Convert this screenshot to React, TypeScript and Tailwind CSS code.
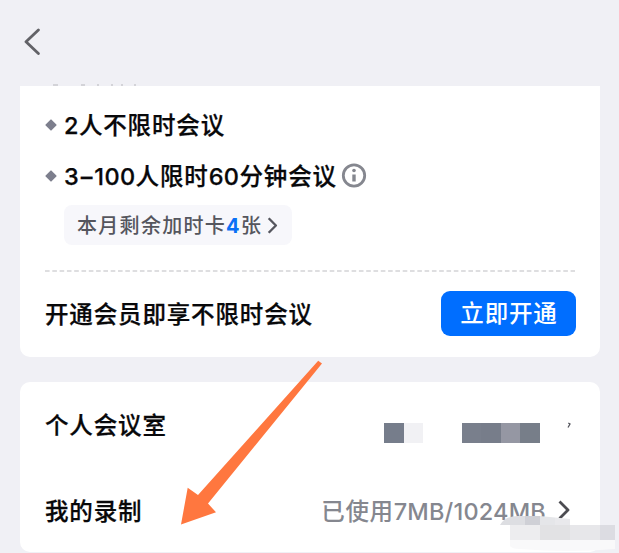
import type { ReactNode } from "react";

const mosaic = [
  "bg-[#797f8c]",
  "bg-[#777d8a]",
  "bg-[#9597a3]",
  "bg-[#777e89]",
];

function Num({ children }: { children: ReactNode }) {
  return <span className="font-['Inter',sans-serif] font-medium tracking-[0.4px]">{children}</span>;
}

function Chevron({ className }: { className: string }) {
  return (
    <svg className={className} viewBox="0 0 12 20" fill="none" stroke="currentColor" strokeLinejoin="round">
      <path d="M1.5 1.5 10 10l-8.5 8.5" />
    </svg>
  );
}

function Feature({ children }: { children: ReactNode }) {
  return (
    <div className="flex h-8 items-center text-[23.5px] tracking-[0.85px] whitespace-nowrap text-[#08080a] [-webkit-text-stroke:0.25px]">
      <svg className="mr-[7px] h-3 w-3 shrink-0" viewBox="0 0 12 12">
        <path d="M6 1.2 10.8 6 6 10.8 1.2 6Z" fill="#7d7f8d" stroke="#7d7f8d" strokeWidth="1.6" strokeLinejoin="round" />
      </svg>
      {children}
    </div>
  );
}

export default function App() {
  return (
    <div className="relative flex h-[553px] w-[619px] flex-col overflow-hidden bg-[#f0f0f5] font-['Noto_Sans_CJK_SC',sans-serif] font-medium">
      <header className="flex h-[86px] shrink-0 flex-col justify-between pt-7 pl-6">
        <svg className="h-7 w-4" viewBox="0 0 16 28" fill="none" stroke="#626267" strokeWidth="2.8" strokeLinecap="round" strokeLinejoin="round">
          <path d="M14.4 2 2 13.8 14.4 25.6" />
        </svg>
        {/* tops of the line scrolled under the header */}
        <svg className="ml-[26px] h-[2px] w-[90px]" viewBox="0 0 90 2" stroke="#c9c9ce" strokeWidth="1.4">
          <path d="M3 1h5M31 1h4M47 1h2M61 1h2M71 1h2M84 1h2" />
        </svg>
      </header>

      <section className="mx-5 h-[271px] w-[580px] shrink-0 rounded-b-[10px] bg-white px-[25px] pt-[23px]">
        <Feature>
          <span>
            <Num>2</Num>人不限时会议
          </span>
        </Feature>
        <div className="mt-[19px]">
          <Feature>
            <span>
              <Num>
                3<span className="mx-[1.5px]">–</span>100
              </Num>
              人限时<Num>60</Num>分钟会议
            </span>
            <svg className="ml-1 h-[26px] w-[26px]" viewBox="0 0 26 26" fill="none" stroke="#85878f">
              <circle cx="13" cy="12.5" r="10.7" strokeWidth="2.8" />
              <circle cx="13" cy="7.5" r="1.8" fill="#85878f" stroke="none" />
              <path d="M13 11.5v7" strokeWidth="3.4" />
            </svg>
          </Feature>
        </div>
        <button className="mt-[13px] ml-[19px] flex h-10 w-[228px] items-center rounded-lg bg-[#f7f7fb] pl-[13px] text-[20px] tracking-[1.3px] whitespace-nowrap text-[#55565e]">
          <span>
            本月剩余加时卡<b className="font-['Inter',sans-serif] text-[#0a70f5]">4</b>张
          </span>
          <Chevron className="ml-[5px] h-[17px] w-[11px] stroke-[2.8]" />
        </button>

        <svg className="mt-[25px] block h-[2px] w-[530px]" viewBox="0 0 530 2">
          <path d="M0 1H530" stroke="#d3d3d6" strokeWidth="1.6" strokeDasharray="4.6 2.7" />
        </svg>

        <div className="mt-[19px] -mr-px flex h-[45px] items-center justify-between">
          <span className="text-[23.5px] tracking-[0.85px] text-[#08080a] [-webkit-text-stroke:0.25px]">
            开通会员即享不限时会议
          </span>
          <button className="h-[45px] w-[135px] rounded-[9px] bg-[#006eff] pb-px pl-px text-[23.5px] tracking-[0.85px] text-white">
            立即开通
          </button>
        </div>
      </section>

      <section className="mx-5 mt-[25px] h-[170px] w-[580px] shrink-0 rounded-[10px] bg-white px-[25px] pt-[21px] text-[23.5px] tracking-[0.85px] text-[#08080a]">
        <div className="flex h-11 items-center">
          <span className="w-[339px] [-webkit-text-stroke:0.25px]">个人会议室</span>
          <div className="mt-4 flex h-5">
            <i className="w-5 bg-[#767d8b]" />
            <i className="mr-[38.5px] w-[19px] bg-[#f1f1f4]" />
            {mosaic.map((color, i) => (
              <i key={i} className={`w-[19.5px] ${color}`} />
            ))}
          </div>
          <svg className="mt-0.5 ml-[26px] h-2 w-[5px]" viewBox="0 0 5 8">
            <path d="M2.3 1 4 2 2 5.5" fill="none" stroke="#55565e" strokeWidth="1.3" />
          </svg>
        </div>
        <div className="mt-[42px] flex h-11 items-center justify-between">
          <span className="[-webkit-text-stroke:0.25px]">我的录制</span>
          <span className="flex items-center pr-[5px] text-[#85878f]">
            <span className="tracking-[0.6px]">
              已使用<span className="font-['Inter',sans-serif] tracking-[0.2px]">7MB/1024MB</span>
            </span>
            <Chevron className="mb-[2px] ml-3 h-[20px] w-3 stroke-[2.8] text-[#4c4c51]" />
          </span>
        </div>
      </section>

      <svg className="absolute top-[350px] left-[170px]" width="160" height="185" viewBox="170 350 160 185">
        <path d="M318.2 360.8 322 363.4 208 503.5 216 512.3 181 524.5 187.7 487.8 198 495Z" fill="#ff773f" />
      </svg>

      {/* blurred-out watermark */}
      <svg className="absolute top-[514px] left-[499px]" width="120" height="39" viewBox="499 514 120 39">
        <path d="M500 525Q505 516 518 516H525V525Z" fill="#dddee2" />
        <path d="M525 516H540V525H525Z" fill="#cfd0d6" />
        <path d="M540 516 555 517.5V525H540Z" fill="#e5e6e9" />
        <path d="M555 517.5 570 519V525H555Z" fill="#e9e9ec" />
        <path d="M510 525H540V540H510Z" fill="#ededef" />
        <path d="M540 525H570V540H540Z" fill="#e2e2e4" />
        <path d="M570 525H600V540H570Z" fill="#e7e7ea" />
        <path d="M600 525H615V540H600Z" fill="#dcdce2" />
        <path d="M510 540H615V549Q570 553 520 549Q512 549 510 546Z" fill="#f9f9fa" />
      </svg>
    </div>
  );
}
